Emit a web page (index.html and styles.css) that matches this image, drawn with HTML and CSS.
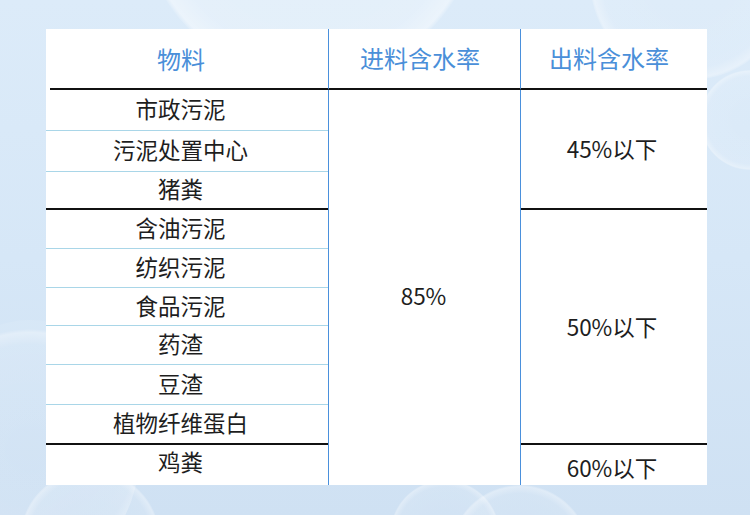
FILE: index.html
```html
<!DOCTYPE html>
<html lang="zh">
<head>
<meta charset="utf-8">
<link rel="stylesheet" href="styles.css">
</head>
<body>
<div class="page">
  <div class="bubble b1"></div>
  <div class="bubble b2"></div>
  <div class="bubble b3"></div>
  <div class="bubble b4"></div>
  <div class="bubble b5"></div>
  <div class="bubble b6"></div>
  <div class="bubble b7"></div>
  <div class="table">
    <div class="th c1">物料</div>
    <div class="th c2">进料含水率</div>
    <div class="th c3">出料含水率</div>

    <div class="td c1 r1">市政污泥</div>
    <div class="td c2 in">85%</div>
    <div class="td c3 out1">45%以下</div>
    <div class="td c1 r2">污泥处置中心</div>
    <div class="td c1 r3 end">猪粪</div>
    <div class="td c1 r4">含油污泥</div>
    <div class="td c3 out2">50%以下</div>
    <div class="td c1 r5">纺织污泥</div>
    <div class="td c1 r6">食品污泥</div>
    <div class="td c1 r7">药渣</div>
    <div class="td c1 r8">豆渣</div>
    <div class="td c1 r9 end">植物纤维蛋白</div>
    <div class="td c1 r10 last">鸡粪</div>
    <div class="td c3 out3">60%以下</div>
  </div>
</div>
</body>
</html>
```
FILE: styles.css
```css
html, body {
  margin: 0;
  padding: 0;
}
body {
  font-family: "Noto Sans CJK SC", "Noto Sans", sans-serif;
}
.page {
  position: relative;
  width: 750px;
  height: 515px;
  overflow: hidden;
  background: linear-gradient(180deg, #dcebf9 0%, #d6e7f7 50%, #cfe1f3 100%);
  padding: 29px 0 0 46px;
  box-sizing: border-box;
}
.bubble {
  position: absolute;
  border-radius: 50%;
  background: radial-gradient(circle at 50% 50%, rgba(255,255,255,0.04) 0%, rgba(255,255,255,0.1) 62%, rgba(255,255,255,0.35) 69%, rgba(255,255,255,0.08) 71%);
}
.b1 { left: 140px; top: -260px; width: 340px; height: 340px; background: radial-gradient(circle, rgba(255,255,255,0.2) 0%, rgba(255,255,255,0.25) 60%, rgba(255,255,255,0.45) 69%, rgba(255,255,255,0) 71%); }
.b2 { left: 590px; top: -120px; width: 200px; height: 200px; }
.b3 { left: 700px; top: 70px; width: 100px; height: 100px; }
.b4 { left: -80px; top: 320px; width: 220px; height: 260px; }
.b5 { left: 20px; top: 470px; width: 140px; height: 140px; }
.b6 { left: 390px; top: 480px; width: 110px; height: 110px; }
.b7 { left: 450px; top: 485px; width: 140px; height: 140px; }

.table {
  position: relative;
  width: 661px;
  background: #fff;
  display: grid;
  grid-template-columns: 282px 193px 186px;
  grid-template-rows: 61px 41px 41px 38px 39px 39px 38px 39px 40px 40px 40px;
}
.th, .td {
  box-sizing: border-box;
  display: flex;
  align-items: center;
  justify-content: center;
  white-space: nowrap;
}
.th {
  color: #4a8fd9;
  font-size: 24px;
  padding-bottom: 3px;
  border-bottom: 2px solid #111;
}
.th.c1 {
  border-bottom: none;
  padding-right: 12px;
  background: linear-gradient(#111, #111) no-repeat 4px 100% / calc(100% - 4px) 2px;
}
.th.c2 { padding-right: 9px; }
.th.c3 { padding-right: 10px; }
.c2 {
  border-left: 1px solid #4a90dc;
  border-right: 1px solid #4a90dc;
}
.td {
  color: #1e1e1e;
  font-size: 22.5px;
}
.td.c1 {
  grid-column: 1;
  border-bottom: 1px solid #a9d6e8;
  padding: 0 13px 4px 0;
}
.td.c1.end {
  border-bottom: 2px solid #111;
}
.td.c1.last {
  border-bottom: none;
  padding-bottom: 9px;
}
.r1 { grid-row: 2; }
.r2 { grid-row: 3; }
.r3 { grid-row: 4; }
.r4 { grid-row: 5; }
.r5 { grid-row: 6; }
.r6 { grid-row: 7; }
.r7 { grid-row: 8; }
.r8 { grid-row: 9; }
.r9 { grid-row: 10; }
.r10 { grid-row: 11; }
.in {
  grid-column: 2;
  grid-row: 2 / 12;
  padding: 14px 2px 0 0;
}
.out1 {
  grid-column: 3;
  grid-row: 2 / 5;
  border-bottom: 2px solid #111;
  padding: 0 4px 3px 0;
}
.out2 {
  grid-column: 3;
  grid-row: 5 / 11;
  border-bottom: 2px solid #111;
  padding: 0 4px 2px 0;
}
.out3 {
  grid-column: 3;
  grid-row: 11;
  padding: 3px 4px 0 0;
}
```
